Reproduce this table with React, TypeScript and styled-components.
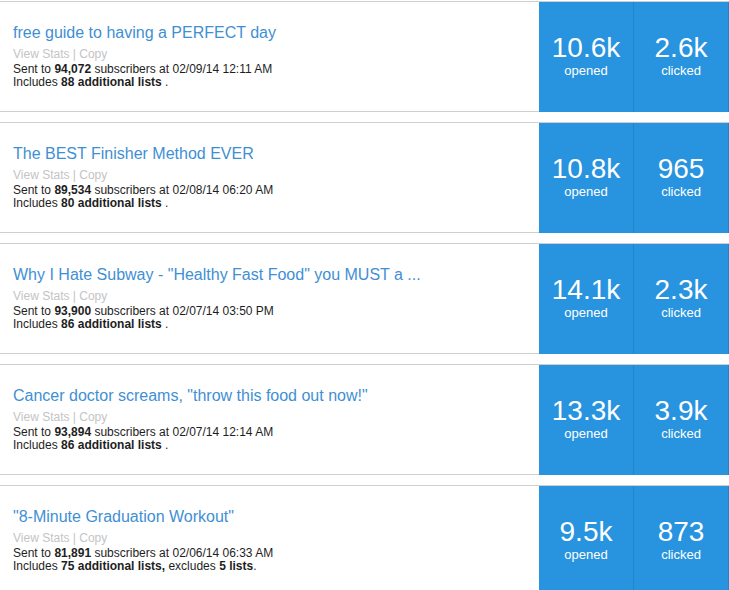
import { createGlobalStyle } from 'styled-components';
import styled from 'styled-components';

interface Campaign {
  title: string;
  sent: string;
  date: string;
  lists: string;
  excludes?: string;
  opened: string;
  clicked: string;
}

const CAMPAIGNS: Campaign[] = [
  { title: 'free guide to having a PERFECT day', sent: '94,072', date: '02/09/14 12:11 AM', lists: '88', opened: '10.6k', clicked: '2.6k' },
  { title: 'The BEST Finisher Method EVER', sent: '89,534', date: '02/08/14 06:20 AM', lists: '80', opened: '10.8k', clicked: '965' },
  { title: 'Why I Hate Subway - "Healthy Fast Food" you MUST a ...', sent: '93,900', date: '02/07/14 03:50 PM', lists: '86', opened: '14.1k', clicked: '2.3k' },
  { title: 'Cancer doctor screams, "throw this food out now!"', sent: '93,894', date: '02/07/14 12:14 AM', lists: '86', opened: '13.3k', clicked: '3.9k' },
  { title: '"8-Minute Graduation Workout"', sent: '81,891', date: '02/06/14 06:33 AM', lists: '75', excludes: '5', opened: '9.5k', clicked: '873' },
];

const GlobalStyle = createGlobalStyle`
  html, body {
    margin: 0;
    padding: 0;
    background: #fff;
    font-family: "Liberation Sans", Arial, sans-serif;
  }
`;

const List = styled.div`
  display: flex;
  flex-direction: column;
  gap: 10px;
  padding-top: 1px;
  width: 729px;
  height: 590px;
  overflow: hidden;
`;

const Row = styled.div`
  display: flex;
  flex-shrink: 0;
  height: 109px;
  border-top: 1px solid #cfcfcf;
  border-bottom: 1px solid #cfcfcf;
`;

const Info = styled.div`
  flex: 1;
  padding: 21px 0 0 13px;
  color: #1e1e1e;
`;

const Title = styled.div`
  font-size: 16px;
  line-height: 20px;
  color: #3f8fd4;
  white-space: nowrap;
`;

const Links = styled.div`
  margin-top: 4px;
  font-size: 12px;
  line-height: 14px;
  color: #c4c4c4;
`;

const Meta = styled.div<{ $first?: boolean }>`
  margin-top: ${({ $first }) => ($first ? '2px' : '0')};
  font-size: 12px;
  line-height: 13px;

  b {
    font-weight: bold;
  }
`;

const Stats = styled.div`
  display: flex;
  width: 190px;
  margin-bottom: -1px;
  background: #2893de;
`;

const Stat = styled.div`
  flex: 1;
  display: flex;
  flex-direction: column;
  align-items: center;
  justify-content: center;
  padding-bottom: 3px;
  border-right: 1px solid #2284cc;
  color: #fff;
`;

const StatValue = styled.div`
  font-size: 28px;
  line-height: 30px;
`;

const StatLabel = styled.div`
  font-size: 13px;
  line-height: 15px;
`;

const App = () => {
  return (
    <>
      <GlobalStyle />
      <List>
        {CAMPAIGNS.map((c) => (
          <Row key={c.title}>
            <Info>
              <Title>{c.title}</Title>
              <Links>View Stats | Copy</Links>
              <Meta $first>
                Sent to <b>{c.sent}</b> subscribers at {c.date}
              </Meta>
              <Meta>
                Includes <b>{c.lists} additional lists</b>
                {c.excludes ? (
                  <>
                    <b>,</b> excludes <b>{c.excludes} lists</b>.
                  </>
                ) : (
                  ' .'
                )}
              </Meta>
            </Info>
            <Stats>
              <Stat>
                <StatValue>{c.opened}</StatValue>
                <StatLabel>opened</StatLabel>
              </Stat>
              <Stat>
                <StatValue>{c.clicked}</StatValue>
                <StatLabel>clicked</StatLabel>
              </Stat>
            </Stats>
          </Row>
        ))}
      </List>
    </>
  );
};

export default App;
